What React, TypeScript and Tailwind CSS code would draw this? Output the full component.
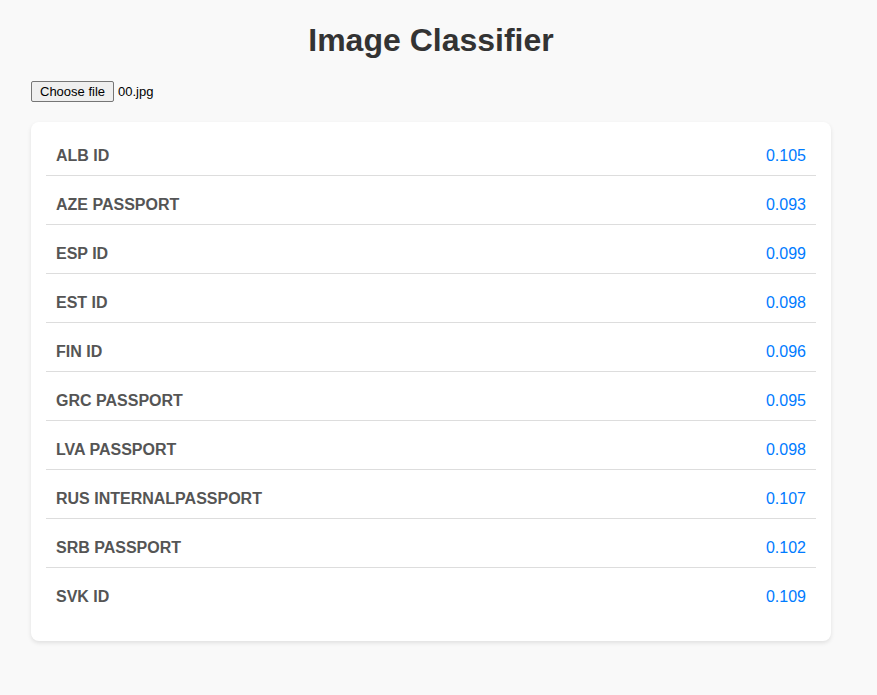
import { useRef, useState } from "react";

interface Score {
  label: string;
  value: string;
}

const scores: Score[] = [
  { label: "ALB ID", value: "0.105" },
  { label: "AZE PASSPORT", value: "0.093" },
  { label: "ESP ID", value: "0.099" },
  { label: "EST ID", value: "0.098" },
  { label: "FIN ID", value: "0.096" },
  { label: "GRC PASSPORT", value: "0.095" },
  { label: "LVA PASSPORT", value: "0.098" },
  { label: "RUS INTERNALPASSPORT", value: "0.107" },
  { label: "SRB PASSPORT", value: "0.102" },
  { label: "SVK ID", value: "0.109" },
];

function FilePicker() {
  const inputRef = useRef<HTMLInputElement>(null);
  const [fileName, setFileName] = useState("00.jpg");

  return (
    <div className="flex items-center gap-1 text-[13px] leading-[15px] text-black">
      <input
        ref={inputRef}
        type="file"
        accept="image/*"
        aria-label="Image file"
        className="hidden"
        onChange={(e) => setFileName(e.target.files?.[0]?.name ?? "No file chosen")}
      />
      <button
        type="button"
        onClick={() => inputRef.current?.click()}
        className="rounded-[2px] border border-[#767676] bg-[#efefef] px-2 py-0.5 hover:bg-[#e5e5e5]"
      >
        Choose file
      </button>
      <span>{fileName}</span>
    </div>
  );
}

export default function App() {
  return (
    <div className="min-h-screen bg-[#f9f9f9] py-5 pr-[15px] font-['Liberation_Sans',Arial,sans-serif]">
      <main className="mx-auto max-w-[800px]">
        <h1 className="mb-[21px] text-center text-[32px] leading-10 font-bold text-[#333333]">
          Image Classifier
        </h1>
        <FilePicker />
        <ul className="mt-5 rounded-lg bg-white p-[15px] shadow-[0_2px_4px_rgba(0,0,0,0.1)]">
          {scores.map(({ label, value }) => (
            <li
              key={label}
              className="mb-2.5 flex justify-between border-b border-[#dddddd] p-2.5 text-base leading-[18px] last:border-b-0"
            >
              <span className="font-bold text-[#555555]">{label}</span>
              <span className="text-[#007bff]">{value}</span>
            </li>
          ))}
        </ul>
      </main>
    </div>
  );
}
